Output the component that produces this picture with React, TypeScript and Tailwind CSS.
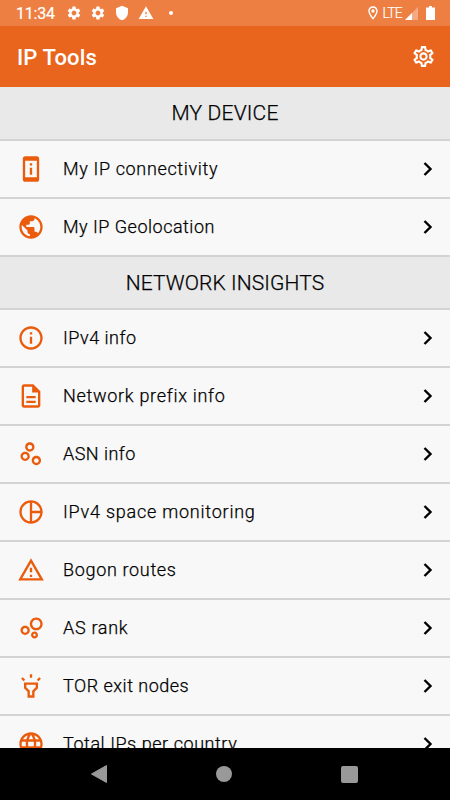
import React from 'react';
import {
  MdPermDeviceInformation, MdPublic, MdInfoOutline, MdOutlineDescription, MdOutlineScatterPlot,
  MdOutlinePieChart, MdOutlineWarningAmber, MdOutlineBubbleChart, MdOutlineHighlight, MdLanguage,
  MdSettings, MdShield, MdWarning, MdOutlineSettings, MdOutlineLocationOn,
} from 'react-icons/md';
import type { IconType } from 'react-icons';

type Item = { icon: IconType; label: string; tracking: string };

const device: Item[] = [
  { icon: MdPermDeviceInformation, label: 'My IP connectivity', tracking: 'tracking-[0.65px]' },
  { icon: MdPublic, label: 'My IP Geolocation', tracking: 'tracking-[0.5px]' },
];

const network: Item[] = [
  { icon: MdInfoOutline, label: 'IPv4 info', tracking: 'tracking-[0.5px]' },
  { icon: MdOutlineDescription, label: 'Network prefix info', tracking: 'tracking-[0.7px]' },
  { icon: MdOutlineScatterPlot, label: 'ASN info', tracking: 'tracking-[0.45px]' },
  { icon: MdOutlinePieChart, label: 'IPv4 space monitoring', tracking: 'tracking-[0.77px]' },
  { icon: MdOutlineWarningAmber, label: 'Bogon routes', tracking: 'tracking-[0.67px]' },
  { icon: MdOutlineBubbleChart, label: 'AS rank', tracking: 'tracking-[0.7px]' },
  { icon: MdOutlineHighlight, label: 'TOR exit nodes', tracking: 'tracking-[0.5px]' },
  { icon: MdLanguage, label: 'Total IPs per country', tracking: 'tracking-[0.55px]' },
];

function Row({ icon: Icon, label, tracking }: Item) {
  return (
    <li className="flex h-[58px] shrink-0 items-center border-b-2 border-[#d3d3d3] bg-[#f8f8f8] pr-[17px] pl-[17px]">
      <Icon className="size-7 shrink-0 text-[#ea5b0c]" />
      <span className={`ml-[18px] flex-1 text-[18px] leading-6 font-light whitespace-nowrap [-webkit-text-stroke:0.25px_#000] ${tracking}`}>{label}</span>
      <svg className="h-[14px] w-[10px] shrink-0" viewBox="0 0 10 14" fill="none">
        <path d="M1.5 1l6 6-6 6" stroke="#000" strokeWidth="2.4" />
      </svg>
    </li>
  );
}

function Section({ title, items, size }: { title: string; items: Item[]; size: string }) {
  return (
    <section className="shrink-0">
      <h2 className={`flex items-center justify-center border-b-2 border-[#d3d3d3] bg-[#e9e9e9] pt-[2px] text-[21px] font-light [-webkit-text-stroke:0.25px_#000] ${size}`}>{title}</h2>
      <ul>{items.map((i) => <Row key={i.label} {...i} />)}</ul>
    </section>
  );
}

export default function App() {
  return (
    <div className="flex h-[800px] w-[450px] flex-col overflow-hidden bg-[#f8f8f8] font-['Roboto',sans-serif] text-black">
      <div className="flex h-[26px] shrink-0 items-center bg-[#ee7f42] pr-[15px] pl-[16px] text-white">
        <span className="w-[39px] pt-[2px] text-[16px] leading-none tracking-[-0.2px] [-webkit-text-stroke:0.2px_#fff]">11:34</span>
        <MdSettings className="ml-[11px] size-4" />
        <MdSettings className="ml-2 size-4" />
        <MdShield className="ml-2 size-4" />
        <MdWarning className="ml-2 size-4" />
        <span className="ml-[15px] size-1 rounded-full bg-white" />
        <span className="flex-1" />
        <MdOutlineLocationOn className="size-4" />
        <span className="ml-[2px] text-[14px] leading-none font-light tracking-[-0.8px] [-webkit-text-stroke:0.2px_#fff]">LTE</span>
        <svg className="ml-[3px] size-[13px]" viewBox="0 0 13 13">
          <path d="M13 0v13H0z" fill="#fff" fillOpacity=".35" />
          <path d="M7 6v7H0z" fill="#fff" />
        </svg>
        <svg className="ml-2 h-[14px] w-[9px]" viewBox="0 0 9 14">
          <path d="M3 0h3v1.5h3V14H0V1.5h3z" fill="#fff" />
        </svg>
      </div>
      <header className="flex h-[61px] shrink-0 items-center justify-between bg-[#e9651d] pr-[14px] pl-[17px] text-white">
        <h1 className="pt-[2px] text-[22px] leading-none font-medium tracking-[0.1px]">IP Tools</h1>
        <MdOutlineSettings className="size-[25px]" stroke="none" />
      </header>
      <main className="flex min-h-0 flex-1 flex-col overflow-hidden">
        <Section title="MY DEVICE" items={device} size="h-[54px] tracking-[0.2px]" />
        <Section title="NETWORK INSIGHTS" items={network} size="h-[53px] tracking-[0.1px]" />
      </main>
      <nav className="flex h-[52px] shrink-0 items-center justify-between bg-black pr-[92px] pl-[91px]">
        <svg className="h-[18px] w-4" viewBox="0 0 16 18"><path d="M15.5.5v17L.5 9z" fill="#999" stroke="#999" strokeLinejoin="round" /></svg>
        <span className="size-4 rounded-full bg-[#999]" />
        <span className="size-[17px] rounded-[2px] bg-[#999]" />
      </nav>
    </div>
  );
}
